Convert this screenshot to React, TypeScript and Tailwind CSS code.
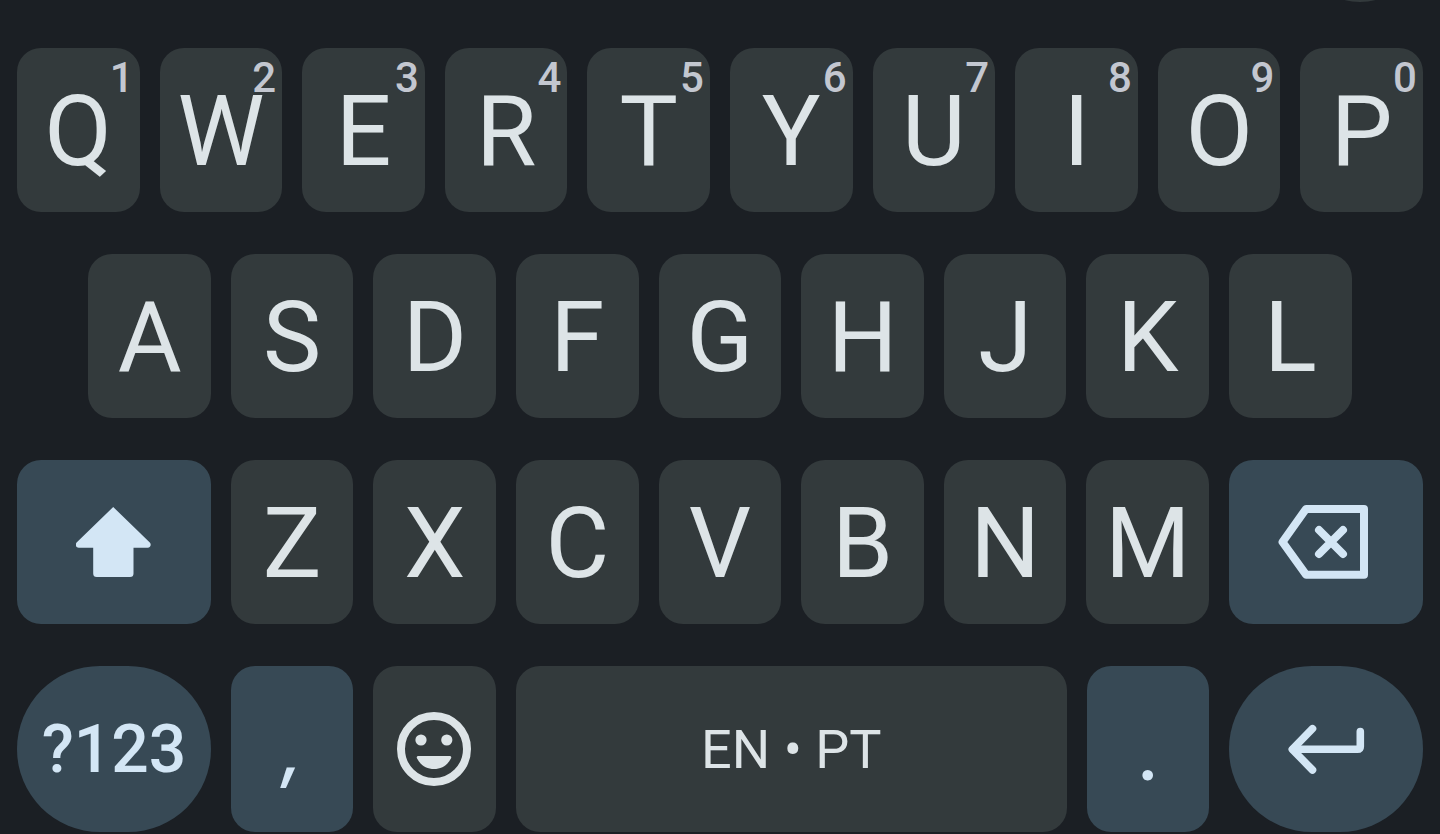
import type { ReactNode } from "react";
import clsx from "clsx";

const topRow = [
  { letter: "Q", hint: "1" },
  { letter: "W", hint: "2" },
  { letter: "E", hint: "3" },
  { letter: "R", hint: "4" },
  { letter: "T", hint: "5" },
  { letter: "Y", hint: "6" },
  { letter: "U", hint: "7" },
  { letter: "I", hint: "8" },
  { letter: "O", hint: "9" },
  { letter: "P", hint: "0" },
];
const homeRow = ["A", "S", "D", "F", "G", "H", "J", "K", "L"];
const bottomRow = ["Z", "X", "C", "V", "B", "N", "M"];

type KeyProps = {
  children: ReactNode;
  label?: string;
  className?: string;
};

function Key({ children, label, className }: KeyProps) {
  return (
    <button
      type="button"
      aria-label={label}
      className={clsx("flex items-center justify-center cursor-pointer active:brightness-125", className)}
    >
      {children}
    </button>
  );
}

function LetterKey({ letter, hint, className }: { letter: string; hint?: string; className?: string }) {
  return (
    <Key
      className={clsx(
        "relative col-span-2 rounded-3xl bg-[#333a3c] pt-1 text-[98px] leading-none text-[#dde4e7]",
        className
      )}
    >
      {letter}
      {hint && (
        <span className="absolute top-[9px] right-1.5 text-[42px] leading-none font-medium text-[#c3c7d0]">{hint}</span>
      )}
    </Key>
  );
}

function ShiftIcon() {
  return (
    <svg width="76" height="76" viewBox="0 0 76 76" fill="currentColor" aria-hidden="true">
      <path d="M37.2 3 73.8 38.5C75.6 40.5 74.6 43.7 71.7 43.7H57.5V69.5Q57.5 73 54 73H20.7Q17.2 73 17.2 69.5V43.7H2.7C-.2 43.7-1.2 40.5.6 38.5Z" />
    </svg>
  );
}

function BackspaceIcon() {
  return (
    <svg
      width="96"
      height="76"
      viewBox="0 0 96 76"
      fill="none"
      stroke="currentColor"
      strokeWidth="8"
      strokeLinecap="round"
      strokeLinejoin="round"
      aria-hidden="true"
    >
      <path d="M28 5H86V70.7H28L4.5 38Z" />
      <path d="M41 26 65 50M65 26 41 50" />
    </svg>
  );
}

function SmileIcon() {
  return (
    <svg width="76" height="76" viewBox="0 0 76 76" fill="currentColor" aria-hidden="true">
      <circle cx="37" cy="38" r="33" fill="none" stroke="currentColor" strokeWidth="8" />
      <circle cx="24" cy="29" r="5.6" />
      <circle cx="49.8" cy="29" r="5.6" />
      <path d="M21.5 45H52.5Q55 45 54 47.3C51 54 44.5 58 37 58S23 54 20 47.3Q19 45 21.5 45Z" />
    </svg>
  );
}

function EnterIcon() {
  return (
    <svg
      width="78"
      height="78"
      viewBox="0 0 78 78"
      fill="none"
      stroke="currentColor"
      strokeWidth="7.6"
      strokeLinecap="round"
      strokeLinejoin="round"
      aria-hidden="true"
    >
      <path d="M25.5 18.7 5.3 39.3 25.5 60" />
      <path d="M6 39.3H70.5Q73.3 39.3 73.3 36.5V21.5" />
    </svg>
  );
}

export default function App() {
  return (
    <main className="relative flex min-h-screen flex-col gap-[42px] overflow-hidden bg-[#1b1f24] px-[17px] pt-12 pb-0.5 font-['Roboto',sans-serif]">
      {/* Toolbar button peeking in from above the keys */}
      <div className="absolute -top-[122px] right-[18px] size-[124px] rounded-full bg-[#333a3c]" />

      <div className="grid h-[164px] grid-cols-20 gap-x-5">
        {topRow.map((key) => (
          <LetterKey key={key.letter} letter={key.letter} hint={key.hint} />
        ))}
      </div>

      <div className="grid h-[164px] grid-cols-20 gap-x-5">
        {homeRow.map((letter, index) => (
          <LetterKey key={letter} letter={letter} className={index === 0 ? "col-start-2" : undefined} />
        ))}
      </div>

      <div className="grid h-[164px] grid-cols-20 gap-x-5">
        <Key label="Shift" className="col-span-3 rounded-3xl bg-[#374955] text-[#d3e6f5]">
          <ShiftIcon />
        </Key>
        {bottomRow.map((letter) => (
          <LetterKey key={letter} letter={letter} />
        ))}
        <Key label="Backspace" className="col-span-3 rounded-3xl bg-[#374955] text-[#d3e6f5]">
          <BackspaceIcon />
        </Key>
      </div>

      <div className="grid h-[166px] grid-cols-20 gap-x-5">
        <Key className="col-span-3 rounded-full bg-[#374955] pt-0.5 text-[66px] leading-none font-medium text-[#d3e6f5]">
          ?123
        </Key>
        <Key className="col-span-2 rounded-3xl bg-[#374955] font-['Inter',sans-serif] text-[72px] leading-none font-medium text-[#d3e6f5] italic">
          ,
        </Key>
        <Key label="Emoji" className="col-span-2 rounded-3xl bg-[#333a3c] text-[#dde4e7]">
          <SmileIcon />
        </Key>
        <Key className="col-span-8 rounded-3xl bg-[#333a3c] pt-0.5 text-[54px] leading-none text-[#dde4e7]">
          EN • PT
        </Key>
        <Key className="col-span-2 rounded-3xl bg-[#374955] font-['Lato',sans-serif] text-[80px] leading-none font-medium text-[#d3e6f5]">
          .
        </Key>
        <Key label="Enter" className="col-span-3 rounded-full bg-[#374955] text-[#d3e6f5]">
          <EnterIcon />
        </Key>
      </div>
    </main>
  );
}
